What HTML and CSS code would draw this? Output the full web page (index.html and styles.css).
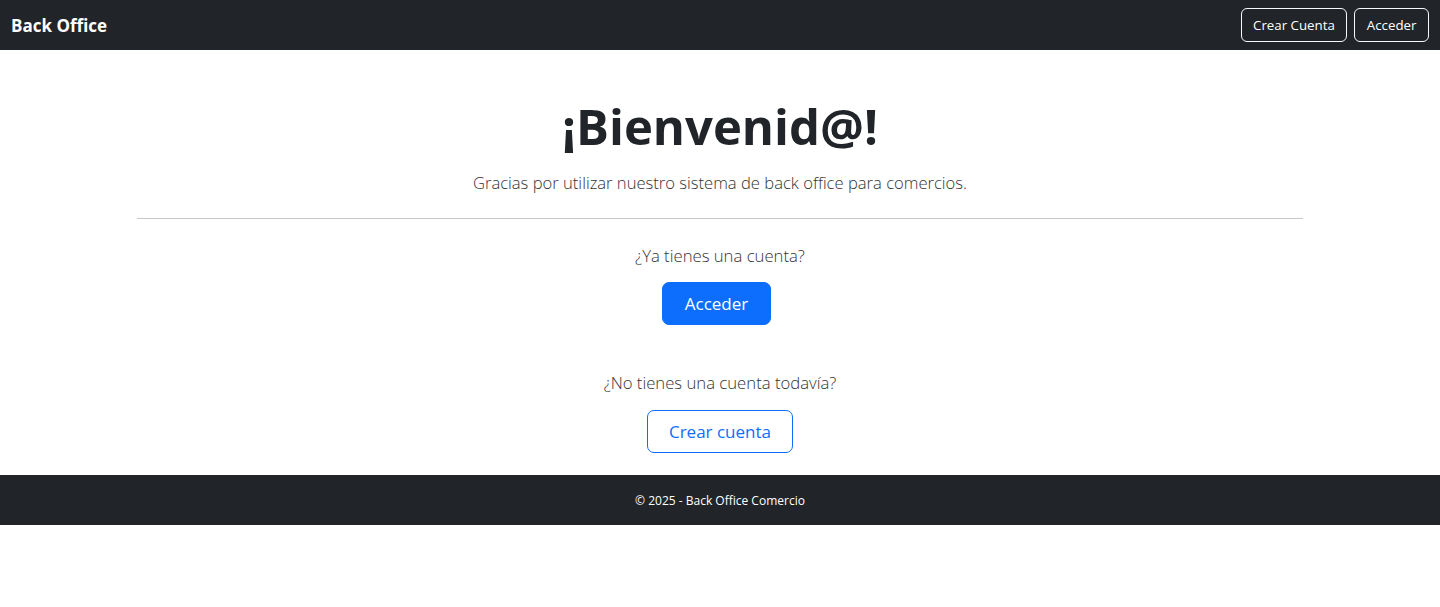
FILE: index.html
```html
<!DOCTYPE html>
<html lang="es">
<head>
<meta charset="utf-8">
<title>Back Office</title>
<link rel="stylesheet" href="styles.css">
</head>
<body>
<nav class="navbar">
  <a class="brand" href="#">Back Office</a>
  <div class="nav-actions">
    <a class="btn-nav" href="#">Crear Cuenta</a>
    <a class="btn-nav" href="#">Acceder</a>
  </div>
</nav>
<main class="main">
  <h1 class="title">¡Bienvenid@!</h1>
  <p class="lead">Gracias por utilizar nuestro sistema de back office para comercios.</p>
  <hr class="divider">
  <section class="block">
    <p class="question">¿Ya tienes una cuenta?</p>
    <a class="btn-lg btn-primary" href="#">Acceder</a>
  </section>
  <section class="block block-second">
    <p class="question">¿No tienes una cuenta todavía?</p>
    <a class="btn-lg btn-outline" href="#">Crear cuenta</a>
  </section>
</main>
<footer class="footer">© 2025 - Back Office Comercio</footer>
</body>
</html>
```
FILE: styles.css
```css
* { box-sizing: border-box; }
body {
  margin: 0;
  font-family: "Segoe UI", "Open Sans", "Noto Sans", sans-serif;
  color: #212529;
  background: #fff;
}
a { text-decoration: none; }
.navbar {
  height: 50px;
  background: #212529;
  display: flex;
  align-items: center;
  justify-content: space-between;
  padding: 0 11px;
}
.brand {
  color: #fff;
  font-weight: 700;
  font-size: 17px;
}
.nav-actions {
  display: flex;
  gap: 7px;
}
.btn-nav {
  display: flex;
  align-items: center;
  height: 34px;
  padding: 0 11.5px;
  border: 1px solid #f8f9fa;
  border-radius: 6px;
  color: #fff;
  font-size: 13.3px;
}
.main {
  width: 1166px;
  margin: 0 auto;
  padding-top: 43px;
  padding-bottom: 22px;
  display: flex;
  flex-direction: column;
  align-items: center;
  text-align: center;
}
.title {
  margin: 0;
  font-size: 49px;
  font-weight: 700;
  line-height: 67px;
}
.lead {
  margin: 8px 0 0;
  font-size: 16.6px;
  font-weight: 300;
  line-height: 30px;
  color: #333;
}
.divider {
  align-self: stretch;
  margin: 20px 0 0;
  border: 0;
  border-top: 1px solid #c8c8c8;
}
.block {
  display: flex;
  flex-direction: column;
  align-items: center;
  margin-top: 23px;
}
.block-second { margin-top: 44px; }
.question {
  margin: 0;
  font-size: 16.7px;
  font-weight: 300;
  line-height: 27px;
  color: #333;
}
.btn-lg {
  margin-top: 13px;
  height: 43px;
  display: flex;
  align-items: center;
  justify-content: center;
  border-radius: 7px;
  font-size: 17px;
  border: 1px solid #0d6efd;
}
.block-second .btn-lg { margin-top: 14px; }
.btn-primary {
  width: 109px;
  margin-right: 7px;
  background: #0d6efd;
  color: #fff;
}
.btn-outline {
  width: 146px;
  background: #fff;
  color: #0d6efd;
}
.footer {
  height: 50px;
  background: #212529;
  color: #fff;
  display: flex;
  align-items: center;
  justify-content: center;
  font-size: 12px;
}
```
